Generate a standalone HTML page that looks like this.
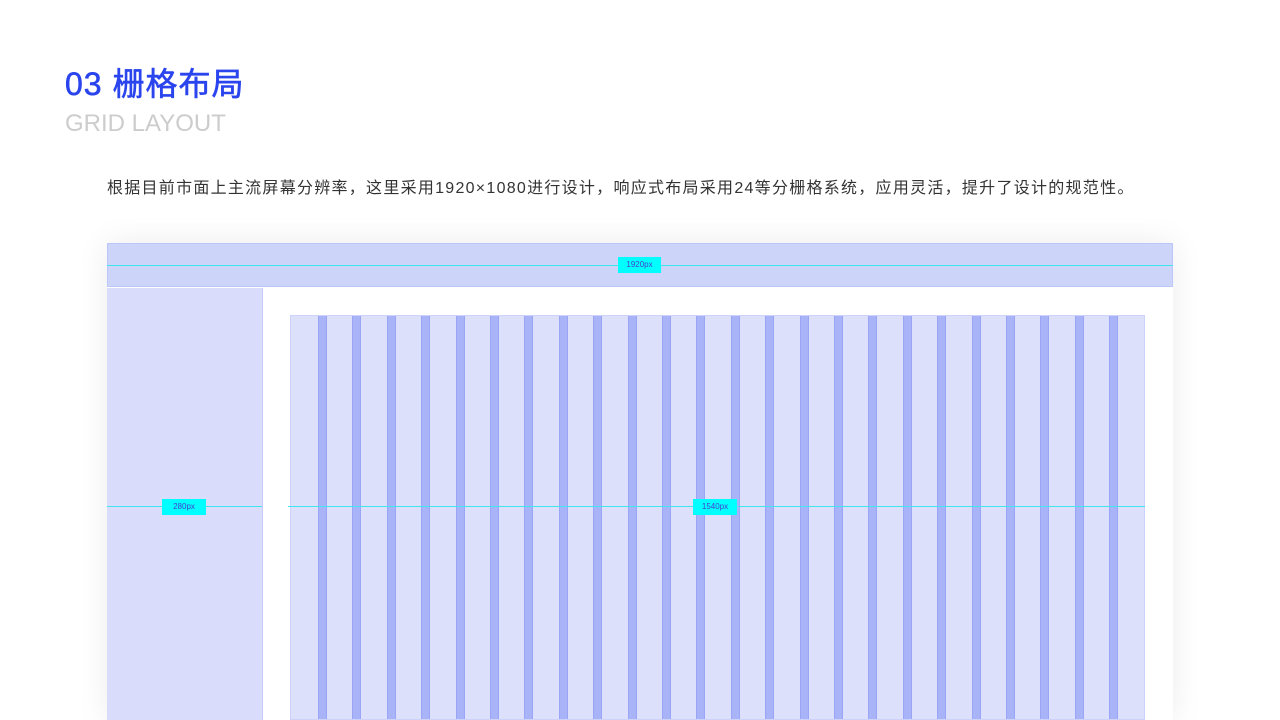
<!DOCTYPE html>
<html><head><meta charset="utf-8"><style>
body{margin:0;width:1280px;height:720px;overflow:hidden;background:#fff;position:relative;font-family:"Liberation Sans","Noto Sans CJK SC",sans-serif}
.a{position:absolute}
.g{position:absolute;top:0;bottom:0;width:9px;background:#a9b4f8;border-left:1px solid #9aa6f5;border-right:1px solid #9aa6f5;box-sizing:border-box}
.lab{position:absolute;background:#00ffff;color:#4a3bd0;font-size:8px;text-align:center;line-height:16px;height:16px}
</style></head><body>
<div class="a" style="left:65px;top:59px;font-size:32px;color:#2a44ee;white-space:nowrap;letter-spacing:1px;-webkit-text-stroke:0.6px #2a44ee">03 栅格布局</div>
<div class="a" style="left:65px;top:110px;font-size:24px;color:#cccccc;white-space:nowrap">GRID LAYOUT</div>
<div class="a" style="left:107px;top:174px;font-size:16px;color:#333;white-space:nowrap;letter-spacing:1.27px">根据目前市面上主流屏幕分辨率，这里采用1920×1080进行设计，响应式布局采用24等分栅格系统，应用灵活，提升了设计的规范性。</div>
<div class="a" style="left:107px;top:243px;width:1066px;height:477px;background:#fff;box-shadow:0 0 30px rgba(0,0,0,0.08)"></div>
<div class="a" style="left:107px;top:243px;width:1066px;height:44px;background:#cdd4fa;border:1px solid #bcc6f8;box-sizing:border-box"></div>
<div class="a" style="left:107px;top:265px;width:1066px;height:1px;background:#3fe6ee"></div>
<div class="lab" style="left:618px;top:257px;width:43px">1920px</div>
<div class="a" style="left:107px;top:288px;width:155px;height:432px;background:#d9dcfb;border-right:1px solid #c6ccf8"></div>
<div class="a" style="left:290px;top:315px;width:855px;height:405px;background:#dde0fb;border:1px solid #ccd2f9;box-sizing:border-box">
<div class="g" style="left:27px"></div><div class="g" style="left:61.4px"></div><div class="g" style="left:95.8px"></div><div class="g" style="left:130.2px"></div><div class="g" style="left:164.6px"></div><div class="g" style="left:199px"></div><div class="g" style="left:233.4px"></div><div class="g" style="left:267.8px"></div><div class="g" style="left:302.2px"></div><div class="g" style="left:336.6px"></div><div class="g" style="left:371px"></div><div class="g" style="left:405.4px"></div><div class="g" style="left:439.8px"></div><div class="g" style="left:474.2px"></div><div class="g" style="left:508.6px"></div><div class="g" style="left:543px"></div><div class="g" style="left:577.4px"></div><div class="g" style="left:611.8px"></div><div class="g" style="left:646.2px"></div><div class="g" style="left:680.6px"></div><div class="g" style="left:715px"></div><div class="g" style="left:749.4px"></div><div class="g" style="left:783.8px"></div><div class="g" style="left:818.2px"></div>
</div>
<div class="a" style="left:107px;top:506px;width:155px;height:1px;background:#3fe6ee"></div>
<div class="a" style="left:288px;top:506px;width:857px;height:1px;background:#3fe6ee"></div>
<div class="lab" style="left:162px;top:499px;width:44px">280px</div>
<div class="lab" style="left:693px;top:499px;width:44px">1540px</div>
</body></html>
